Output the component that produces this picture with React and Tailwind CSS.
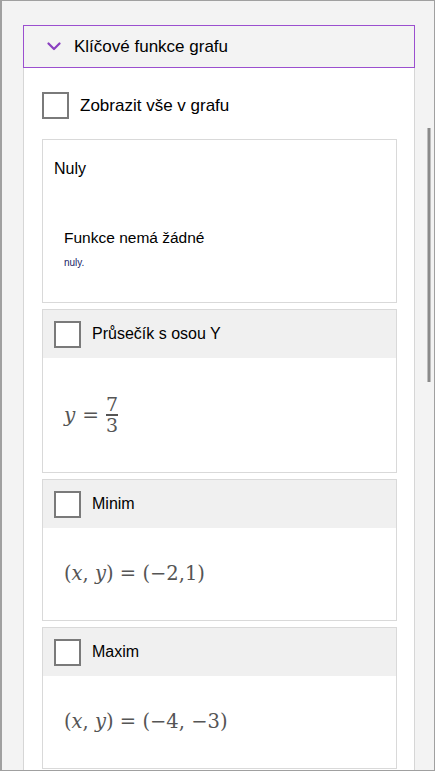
import React from 'react';

const ui = { fontFamily: '"Segoe UI", "Liberation Sans", Arial, sans-serif' };
const math = { fontFamily: '"Cambria Math", "DejaVu Serif", "Liberation Serif", serif' };

function Box({ className = '' }) {
  return <div className={`w-[27px] h-[27px] border-2 border-[#7a7a7a] bg-white shrink-0 ${className}`} />;
}

function Card({ title, children, bodyClass }) {
  return (
    <div className="border border-[#d9d9d9] bg-white">
      <div className="h-[48px] bg-[#f0f0f0] flex items-center pl-[11px]">
        <Box />
        <span className="ml-[11px] text-[16px] text-black" style={ui}>{title}</span>
      </div>
      <div className={bodyClass}>{children}</div>
    </div>
  );
}

function I({ children }) {
  return <span className="italic">{children}</span>;
}

export default function App() {
  return (
    <div className="relative w-[435px] h-[771px] overflow-hidden bg-[#f3f3f3] border border-[#a0a0a0] border-l-2">
      <div className="pl-[21px] pt-[24px] w-[413px]">
        <div className="h-[43px] border border-[#9b4fcf] bg-[#f3f3f3] flex items-center pl-[23px]">
          <svg width="14" height="9" viewBox="0 0 14 9" fill="none">
            <path d="M1.5 1.5 L7 7 L12.5 1.5" stroke="#8a3fc0" strokeWidth="2.2" strokeLinecap="round" strokeLinejoin="round" />
          </svg>
          <span className="ml-[13px] text-[17px] text-black" style={ui}>Klíčové funkce grafu</span>
        </div>

        <div className="bg-white border-x border-[#d6d6d6] pl-[18px] pr-[17px] pb-[4px] h-[710px]">
          <div className="flex items-center pt-[24px]">
            <Box />
            <span className="ml-[11px] text-[17px] text-black" style={ui}>Zobrazit vše v grafu</span>
          </div>

          <div className="flex flex-col gap-[6px] mt-[20px]">
            <div className="border border-[#d9d9d9] bg-white h-[164px] pl-[11px] pt-[17px]" style={ui}>
              <div className="text-[16px] text-black leading-[24px]">Nuly</div>
              <div className="pl-[10px] mt-[45px] text-[15.5px] text-black leading-[24px]">Funkce nemá žádné</div>
              <div className="pl-[10px] mt-[6px] text-[10px] text-[#1a2566] leading-[14px]">nuly.</div>
            </div>

            <Card title="Průsečík s osou Y" bodyClass="h-[114px] pl-[21px] flex items-center">
              <div className="flex items-center text-[20px] text-[#555555]" style={math}>
                <I>y</I>
                <span className="mx-[7px]">=</span>
                <span className="inline-flex flex-col items-center leading-[19px] text-[19px]">
                  <span>7</span>
                  <span className="w-[12px] h-[1.5px] bg-[#555555]" />
                  <span>3</span>
                </span>
              </div>
            </Card>

            <Card title="Minim" bodyClass="h-[92px] pl-[21px] flex items-center">
              <div className="text-[19.5px] text-[#555555]" style={math}>
                (<I>x</I>, <I>y</I>) = (−2,1)
              </div>
            </Card>

            <Card title="Maxim" bodyClass="h-[92px] pl-[21px] flex items-center">
              <div className="text-[19.5px] text-[#555555]" style={math}>
                (<I>x</I>, <I>y</I>) = (−4, −3)
              </div>
            </Card>
          </div>
        </div>
      </div>

      <div className="absolute left-[425px] top-[127px] w-[4px] h-[254px] bg-[#8a8a8a] border-x border-[#bdbdbd]" />
    </div>
  );
}
